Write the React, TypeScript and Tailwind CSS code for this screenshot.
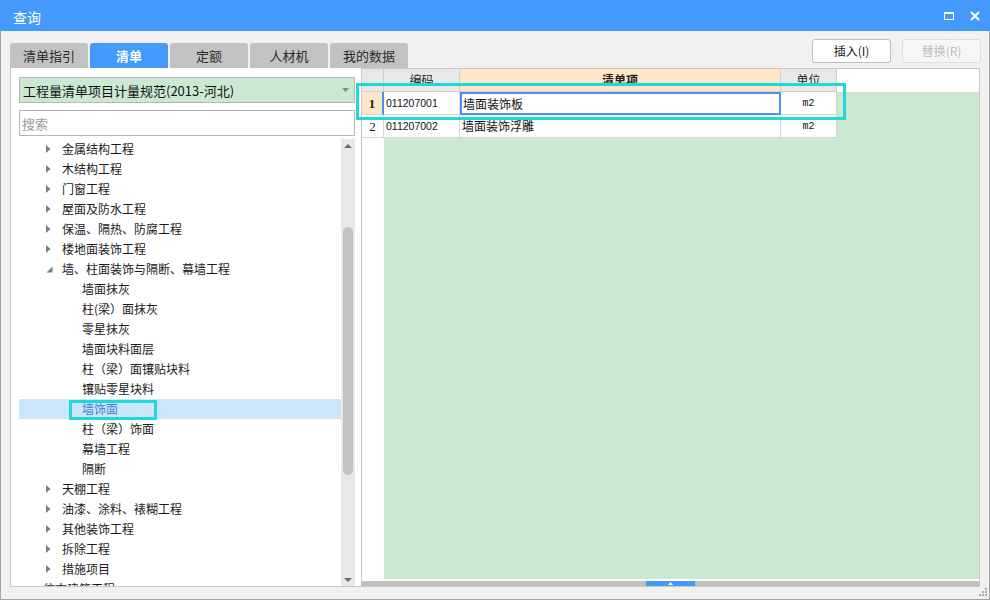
import React from "react";

const CN = "font-['Microsoft_YaHei','Noto_Sans_CJK_SC',sans-serif]";

function TriRight() {
  return (
    <svg width="5" height="8" viewBox="0 0 5 8" className="block">
      <polygon points="0,0 4.5,4 0,8" fill="#7d7d7d" />
    </svg>
  );
}

function TriOpen() {
  return (
    <svg width="7" height="7" viewBox="0 0 7 7" className="block">
      <polygon points="6.5,0.5 6.5,6.5 0.5,6.5" fill="#7d7d7d" />
    </svg>
  );
}

type Node = { text: string; level: 0 | 1 | 2; kind: "closed" | "open" | "leaf"; selected?: boolean };

const nodes: Node[] = [
  { text: "金属结构工程", level: 1, kind: "closed" },
  { text: "木结构工程", level: 1, kind: "closed" },
  { text: "门窗工程", level: 1, kind: "closed" },
  { text: "屋面及防水工程", level: 1, kind: "closed" },
  { text: "保温、隔热、防腐工程", level: 1, kind: "closed" },
  { text: "楼地面装饰工程", level: 1, kind: "closed" },
  { text: "墙、柱面装饰与隔断、幕墙工程", level: 1, kind: "open" },
  { text: "墙面抹灰", level: 2, kind: "leaf" },
  { text: "柱(梁）面抹灰", level: 2, kind: "leaf" },
  { text: "零星抹灰", level: 2, kind: "leaf" },
  { text: "墙面块料面层", level: 2, kind: "leaf" },
  { text: "柱（梁）面镶贴块料", level: 2, kind: "leaf" },
  { text: "镶贴零星块料", level: 2, kind: "leaf" },
  { text: "墙饰面", level: 2, kind: "leaf", selected: true },
  { text: "柱（梁）饰面", level: 2, kind: "leaf" },
  { text: "幕墙工程", level: 2, kind: "leaf" },
  { text: "隔断", level: 2, kind: "leaf" },
  { text: "天棚工程", level: 1, kind: "closed" },
  { text: "油漆、涂料、裱糊工程", level: 1, kind: "closed" },
  { text: "其他装饰工程", level: 1, kind: "closed" },
  { text: "拆除工程", level: 1, kind: "closed" },
  { text: "措施项目", level: 1, kind: "closed" },
  { text: "仿古建筑工程", level: 0, kind: "leaf" },
];

function TreeRow({ n }: { n: Node }) {
  const bg = n.selected ? "bg-[#cce5fa] text-[#3b7fd9]" : "text-[#1a1a1a]";
  if (n.level === 2) {
    return (
      <div className={`h-[20px] flex items-center pl-[63px] text-[12px] leading-none whitespace-nowrap ${bg}`}>
        {n.text}
      </div>
    );
  }
  if (n.level === 0) {
    return (
      <div className={`h-[20px] flex items-center pl-[24px] text-[12px] leading-none whitespace-nowrap ${bg}`}>
        {n.text}
      </div>
    );
  }
  return (
    <div className={`h-[20px] flex items-center pl-[27px] text-[12px] leading-none whitespace-nowrap ${bg}`}>
      <div className="w-[16px] flex items-center">
        {n.kind === "open" ? <TriOpen /> : <TriRight />}
      </div>
      {n.text}
    </div>
  );
}

export default function App() {
  return (
    <div className={`relative w-[990px] h-[600px] flex flex-col bg-[#f1f1f1] overflow-hidden ${CN}`}>
      {/* Title bar */}
      <div className="h-[31px] shrink-0 bg-[#4499fd] flex items-center justify-between pl-[13px] pr-[10px] text-white">
        <span className="text-[14px] leading-none pt-[2px]">查询</span>
        <div className="flex items-center gap-[16px] pt-[1px]">
          <div className="w-[10px] h-[8px] border-[1.5px] border-t-[2.5px] border-white" />
          <svg width="10" height="10" viewBox="0 0 10 10" className="block">
            <path d="M1 1 L9 9 M9 1 L1 9" stroke="#fff" strokeWidth="2" />
          </svg>
        </div>
      </div>

      {/* Body */}
      <div className="flex-1 flex flex-col border-l border-r border-b border-[#a3a3a3] pl-[9px] pr-[8px]">
        {/* Tabs + buttons */}
        <div className="h-[37px] shrink-0 flex items-end justify-between">
          <div className="flex items-end gap-[2px]">
            {["清单指引", "清单", "定额", "人材机", "我的数据"].map((t, i) => (
              <div
                key={t}
                className={
                  i === 1
                    ? "w-[78px] h-[25px] rounded-t-[3px] bg-[#4499fd] text-white font-bold text-[13px] flex items-center justify-center leading-none"
                    : "w-[78px] h-[25px] rounded-t-[3px] bg-[#c2c2c2] text-[#2a2a2a] text-[13px] flex items-center justify-center leading-none"
                }
              >
                {t}
              </div>
            ))}
          </div>
          <div className="self-start mt-[8px] flex gap-[11px]">
            <div className="w-[79px] h-[24px] bg-white border border-[#bdbdbd] rounded-[3px] flex items-center justify-center text-[12px] text-[#1a1a1a] leading-none">
              插入(I)
            </div>
            <div className="w-[79px] h-[24px] bg-[#f6f6f6] border border-[#dcdcdc] rounded-[3px] flex items-center justify-center text-[12px] text-[#bcbcbc] leading-none">
              替换(R)
            </div>
          </div>
        </div>

        {/* Main panels */}
        <div className="h-[519px] flex">
          {/* Left panel */}
          <div className="w-[351px] h-full bg-white border-l border-b border-[#c8c8c8] flex flex-col pl-[8px] pr-[6px] pt-[9px]">
            <div className="h-[26px] shrink-0 bg-[#cde8d1] border border-[#b5b5b5] flex items-center justify-between pl-[3px] pr-[5px]">
              <span className="text-[13px] leading-none text-[#111]">工程量清单项目计量规范(2013-河北)</span>
              <svg width="7" height="4" viewBox="0 0 7 4" className="block">
                <polygon points="0,0 7,0 3.5,4" fill="#8a8a8a" />
              </svg>
            </div>
            <div className="mt-[7px] h-[26px] shrink-0 bg-white border border-[#b5b5b5] flex items-center pl-[2px]">
              <span className="text-[13px] leading-none text-[#9a9a9a]">搜索</span>
            </div>
            <div className="mt-[3px] flex-1 flex min-h-0">
              <div className="flex-1 overflow-hidden">
                {nodes.map((n) => (
                  <TreeRow key={n.text} n={n} />
                ))}
              </div>
              <div className="w-[14px] bg-[#e8e8e8] flex flex-col items-center">
                <div className="h-[12px] shrink-0 flex items-center justify-center pt-[2px]">
                  <svg width="8" height="4" viewBox="0 0 8 4" className="block">
                    <polygon points="0,4 8,4 4,0" fill="#6b6b6b" />
                  </svg>
                </div>
                <div className="h-[76px] shrink-0" />
                <div className="w-[10px] h-[248px] shrink-0 rounded-[5px] bg-[#c2c2c2]" />
                <div className="flex-1" />
                <div className="h-[12px] shrink-0 flex items-center justify-center pb-[1px]">
                  <svg width="8" height="4" viewBox="0 0 8 4" className="block">
                    <polygon points="0,0 8,0 4,4" fill="#6b6b6b" />
                  </svg>
                </div>
              </div>
            </div>
          </div>

          {/* Table panel */}
          <div className="w-[619px] h-full border border-[#c8c8c8] bg-white flex flex-col">
            {/* Header */}
            <div className="h-[23px] shrink-0 flex text-[12px] leading-none text-[#222]">
              <div className="w-[22px] bg-[#e8e8e8] border-r border-b border-[#cfcfcf]" />
              <div className="w-[76px] bg-[#e8e8e8] border-r border-b border-[#cfcfcf] flex items-center justify-center">
                编码
              </div>
              <div className="w-[321px] bg-[#fee6c9] border-r border-b border-[#cfcfcf] flex items-center justify-center font-bold">
                清单项
              </div>
              <div className="w-[56px] bg-[#e8e8e8] border-r border-b border-[#cfcfcf] flex items-center justify-center">
                单位
              </div>
              <div className="flex-1" />
            </div>
            {/* Body */}
            <div className="flex-1 flex min-h-0">
              <div className="w-[22px] bg-white flex flex-col">
                <div className="h-[23px] bg-[#fde5c8] border-b border-r-2 border-b-[#d6d6d6] border-r-[#4a90f0] flex items-center justify-center font-['Liberation_Serif',serif] font-bold text-[13px] leading-none text-[#222]">
                  1
                </div>
                <div className="h-[23px] bg-white border-b border-r border-[#d6d6d6] flex items-center justify-center font-['Liberation_Serif',serif] text-[13px] leading-none text-[#222]">
                  2
                </div>
              </div>
              <div className="flex-1 bg-[#cde8d1] flex flex-col">
                {[
                  { code: "011207001", name: "墙面装饰板", unit: "m2", active: true },
                  { code: "011207002", name: "墙面装饰浮雕", unit: "m2", active: false },
                ].map((r) => (
                  <div key={r.code} className="h-[23px] flex">
                    <div className="w-[76px] h-full bg-white border-r border-b border-[#d6d6d6] flex items-center pl-[2px] font-['Liberation_Sans',sans-serif] text-[10.5px] leading-none text-[#111]">
                      {r.code}
                    </div>
                    <div
                      className={
                        r.active
                          ? "w-[321px] h-full bg-white border-2 border-[#4a90f0] flex items-center pl-[1px] text-[12px] leading-none text-[#111]"
                          : "w-[321px] h-full bg-white border-r border-b border-[#d6d6d6] flex items-center pl-[2px] text-[12px] leading-none text-[#111]"
                      }
                    >
                      {r.name}
                    </div>
                    <div className="w-[56px] h-full bg-white border-r border-b border-[#d6d6d6] flex items-center justify-center pt-[2px] font-['Liberation_Mono',monospace] text-[10px] leading-none text-[#111]">
                      {r.unit}
                    </div>
                  </div>
                ))}
              </div>
            </div>
            <div className="h-[2px] shrink-0 bg-white" />
            <div className="h-[5px] shrink-0 bg-[#c0c0c0] flex pl-[284px]">
              <div className="w-[49px] h-full bg-[#4499fd] flex items-center justify-center">
                <svg width="5" height="3" viewBox="0 0 5 3" className="block">
                  <polygon points="0,3 5,3 2.5,0" fill="#fff" />
                </svg>
              </div>
            </div>
          </div>
        </div>
      </div>

      {/* Resize grip */}
      <svg width="9" height="9" viewBox="0 0 9 9" className="absolute right-[3px] bottom-[4px]">
        <rect x="7" y="1" width="2" height="2" fill="#a8a8a8" />
        <rect x="4" y="4" width="2" height="2" fill="#a8a8a8" />
        <rect x="7" y="4" width="2" height="2" fill="#a8a8a8" />
        <rect x="1" y="7" width="2" height="2" fill="#a8a8a8" />
        <rect x="4" y="7" width="2" height="2" fill="#a8a8a8" />
        <rect x="7" y="7" width="2" height="2" fill="#a8a8a8" />
      </svg>

      {/* Highlight overlays */}
      <div className="absolute left-[356px] top-[83px] w-[490px] h-[37px] border-[3px] border-[#1fd9d9] pointer-events-none" />
      <div className="absolute left-[69px] top-[400px] w-[88px] h-[20px] border-[3px] border-[#1fd9d9] pointer-events-none" />
    </div>
  );
}
